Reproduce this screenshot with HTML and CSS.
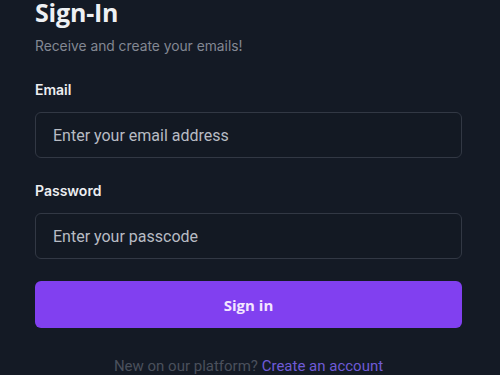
FILE: index.html
```html
<!DOCTYPE html>
<html lang="en">
<head>
<meta charset="utf-8">
<title>Sign-In</title>
<link rel="stylesheet" href="styles.css">
</head>
<body>
<main class="card">
  <h1 class="title">Sign-In</h1>
  <p class="subtitle">Receive and create your emails!</p>
  <form class="form">
    <label class="field">
      <span class="label">Email</span>
      <input class="input" type="email" placeholder="Enter your email address">
    </label>
    <label class="field">
      <span class="label">Password</span>
      <input class="input" type="password" placeholder="Enter your passcode">
    </label>
    <button class="btn" type="button">Sign in</button>
  </form>
  <p class="footer">New on our platform? <a class="link" href="#">Create an account</a></p>
</main>
</body>
</html>
```
FILE: styles.css
```css
html, body {
  margin: 0;
  padding: 0;
  background: #141a25;
  height: 100%;
  overflow: hidden;
}
body {
  font-family: Inter, Roboto, sans-serif;
  color: #e6e8ec;
}
.card {
  padding: 0 38px 0 35px;
  margin-top: -5px;
}
.title {
  margin: 0;
  font-family: "Open Sans", sans-serif;
  font-weight: 700;
  font-size: 25px;
  line-height: 34px;
  color: #eef0f3;
  letter-spacing: -0.2px;
}
.subtitle {
  margin: 9px 0 0;
  font-family: Inter, sans-serif;
  font-size: 13.8px;
  line-height: 16px;
  color: #838893;
}
.form {
  display: flex;
  flex-direction: column;
  margin-top: 27px;
}
.field {
  display: flex;
  flex-direction: column;
  margin-bottom: 22px;
}
.field + .field {
  margin-top: 2px;
}
.label {
  font-size: 14px;
  font-weight: 600;
  line-height: 17px;
  color: #eceef1;
  margin-bottom: 14px;
}
.input {
  box-sizing: border-box;
  height: 46px;
  border: 1px solid #323844;
  border-radius: 6px;
  background: #131923;
  padding: 0 17px;
  font-family: Roboto, sans-serif;
  font-size: 16px;
  color: #e6e8ec;
  outline: none;
}
.input::placeholder {
  color: #b8bcc4;
}
.btn {
  height: 47px;
  border: 0;
  border-radius: 6px;
  background: #8140f0;
  color: #f3e6ff;
  font-family: "Open Sans", sans-serif;
  font-weight: 700;
  font-size: 15px;
}
.footer {
  margin: 30px 0 0;
  text-align: center;
  font-family: Roboto, sans-serif;
  font-size: 15px;
  line-height: 17px;
  color: #4a505c;
}
.link {
  color: #6f5bd6;
  text-decoration: none;
}
```
